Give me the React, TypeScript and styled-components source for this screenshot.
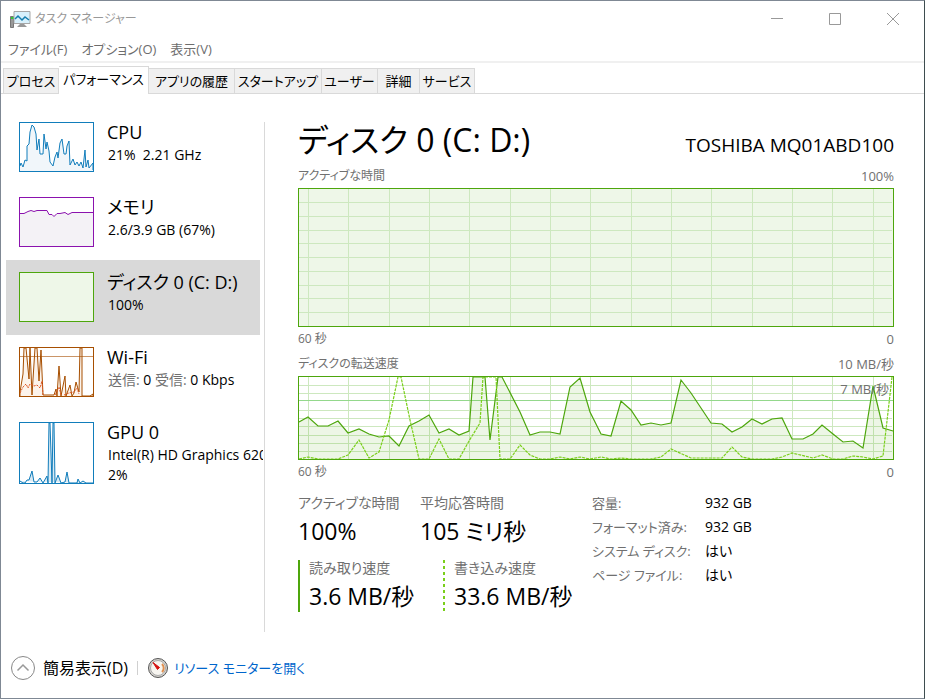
import React from "react";
import styled, { createGlobalStyle, css } from "styled-components";

const Global = createGlobalStyle`
  * { box-sizing: border-box; }
  html, body, #root { height: 100%; margin: 0; }
  body { background: #3e4d4f; }
  body, button {
    font-family: "Open Sans", "Noto Sans CJK JP", sans-serif;
    font-size: 14px;
    line-height: 20px;
    font-weight: 400;
    font-feature-settings: "palt";
    color: #000;
  }
  button { border: 0; padding: 0; background: none; text-align: left; }
  h1, h2, p, dl, dd, dt { margin: 0; font-weight: inherit; }
`;

const Window = styled.div`
  min-height: 100%;
  display: flex;
  flex-direction: column;
  background: #fff;
  border: 1px solid #7f8894;
  border-right-color: #3e4d4f;
`;

const TitleBar = styled.header`
  display: flex;
  align-items: center;
  height: 36px;
  padding: 0 2px 0 9px;
  color: #999;
`;
const AppTitle = styled.h1`
  flex: 1;
  margin-left: 4px;
  font-size: 12px;
`;
const Caption = styled.button`
  width: 58px;
  height: 36px;
  display: grid;
  place-items: center;
  color: #999;
`;

const MenuBar = styled.nav`
  display: flex;
  gap: 14px;
  height: 26px;
  padding-left: 7px;
  border-bottom: 2px solid #f0f0f0;
`;
const MenuItem = styled.button`
  font-size: 13px;
  color: #6d6d6d;
`;

const TabBar = styled.div`
  display: flex;
  align-items: flex-end;
  height: 31px;
  padding-left: 2px;
  border-bottom: 1px solid #d9d9d9;
`;
const Tab = styled.button<{ $active?: boolean; $width: number }>`
  width: ${(p) => p.$width}px;
  height: 25px;
  text-align: center;
  white-space: nowrap;
  font-size: 13px;
  background: #f0f0f0;
  border: 1px solid #d9d9d9;
  border-left-width: 0;
  border-bottom: 0;
  &:first-child { border-left-width: 1px; }
  ${(p) =>
    p.$active &&
    css`
      height: 28px;
      margin-bottom: -1px;
      padding-bottom: 3px;
      background: #fff;
    `}
`;

const Body = styled.main`
  flex: 1;
  display: flex;
  padding: 28px 30px 17px 5px;
`;
const Sidebar = styled.aside`
  width: 259px;
  flex: none;
  border-right: 1px solid #d9d9d9;
  display: flex;
  flex-direction: column;
  margin-right: 33px;
`;
const Resource = styled.button<{ $selected?: boolean; $first?: boolean }>`
  display: flex;
  align-items: flex-start;
  gap: 13px;
  min-height: ${(p) => (p.$first ? 63 : 75)}px;
  padding: ${(p) => (p.$first ? 0 : 12)}px 0 13px 13px;
  margin-right: ${(p) => (p.$selected ? 4 : 1)}px;
  background: ${(p) => (p.$selected ? "#d9d9d9" : "transparent")};
  overflow: hidden;
`;
const Thumb = styled.svg`
  flex: none;
  display: block;
`;
const ResourceText = styled.span`
  display: flex;
  flex-direction: column;
  white-space: nowrap;
  min-width: 0;
`;
const ResourceName = styled.span`
  font-size: 18px;
  line-height: 20px;
  margin-bottom: 3px;
`;
const ResourceValue = styled.span`
  line-height: 20px;
  margin-left: 1px;
`;
const Muted = styled.span`
  color: #707070;
`;

const Detail = styled.section`
  flex: 1;
  min-width: 0;
`;
const Heading = styled.div`
  display: flex;
  justify-content: space-between;
  align-items: baseline;
  height: 42px;
`;
const DiskName = styled.h2`
  font-size: 32px;
  line-height: 36px;
`;
const Model = styled.p`
  font-size: 19px;
`;
const ScaleRow = styled.div<{ $below?: boolean }>`
  display: flex;
  justify-content: space-between;
  height: ${(p) => (p.$below ? 25 : 24)}px;
  line-height: 24px;
  font-size: 13px;
  color: #707070;
`;
const ScaleName = styled.span`
  font-size: 12px;
`;
const ChartBox = styled.div`
  position: relative;
`;
const Chart = styled.svg`
  display: block;
  width: 100%;
`;
const Marker = styled.span`
  position: absolute;
  right: 5px;
  top: 3px;
  font-size: 13px;
  color: #707070;
`;

const Stats = styled.div`
  display: flex;
  margin-top: 10px;
`;
const Live = styled.dl`
  width: 294px;
`;
const LiveRow = styled.div<{ $cols: string }>`
  display: grid;
  grid-template-columns: ${(p) => p.$cols};
  & + & { margin-top: 13px; }
`;
const Metric = styled.div<{ $line?: "solid" | "dashed" }>`
  white-space: nowrap;
  height: 52px;
  ${(p) =>
    p.$line &&
    css`
      padding-left: 11px;
      background: ${p.$line === "solid"
        ? "linear-gradient(#4da60c, #4da60c)"
        : "repeating-linear-gradient(#7acf1a 0 3px, #fff 3px 6px)"}
        left / 2px 100% no-repeat;
    `}
`;
const MetricName = styled.dt`
  line-height: 16px;
  color: #707070;
`;
const MetricValue = styled.dd`
  font-size: 23px;
  line-height: 40px;
`;
const Facts = styled.dl`
  display: grid;
  grid-template-columns: 113px auto;
  grid-auto-rows: 24px;
  line-height: 16px;
  align-content: start;
  white-space: nowrap;
  dt { color: #707070; font-size: 13px; }
`;

const Footer = styled.footer`
  display: flex;
  align-items: center;
  height: 38px;
  margin-bottom: 11px;
  padding-left: 9px;
`;
const Fewer = styled.button`
  display: flex;
  align-items: center;
  gap: 7px;
  font-size: 16px;
`;
const Divider = styled.span`
  width: 1px;
  height: 14px;
  margin: 0 9px;
  background: #d0d0d0;
`;
const MonitorLink = styled.a`
  display: flex;
  align-items: center;
  gap: 5px;
  font-size: 13px;
  color: #0066cc;
  text-decoration: none;
`;

const verticals = [10, 50, 91, 131, 171, 212, 252, 292, 333, 373, 413, 454, 494, 534, 575];

function Grid({ height, rows }: { height: number; rows: number[] }) {
  return (
    <g stroke="#cde8bf" shapeRendering="crispEdges">
      {verticals.map((x) => (
        <line key={x} x1={x + 0.5} x2={x + 0.5} y1={1} y2={height - 1} />
      ))}
      {rows.map((y) => (
        <line key={y} x1={1} x2={594} y1={y + 0.5} y2={y + 0.5} />
      ))}
    </g>
  );
}

const readLine =
  "1,46 10,41 20,50 30,50 40,45 50,57 61,53 71,58 81,61 91,60 101,70 111,50 121,45 131,39 141,57 151,53 161,59 171,55 175,1 187,1 192,64 200,1 204,1 222,36 232,59 242,56 252,56 262,58 272,11 282,2 292,36 303,58 313,60 323,25 333,34 343,49 353,47 363,49 373,47 383,4 393,17 403,32 413,47 424,48 434,56 444,51 454,43 464,48 474,43 484,42 494,63 505,63 515,58 524,49 535,58 545,66 555,65 565,72 575,10 585,52 595,55";
const writeLine =
  "1,83 10,81 20,83 40,83 50,79 61,64 71,82 81,76 91,44 100,1 103,1 112,44 121,83 131,83 141,63 151,83 161,83 171,65 182,47 185,1 198,1 202,83 212,83 222,69 232,79 242,83 252,83 262,81 272,83 282,81 292,83 303,81 313,83 323,82 333,83 353,83 363,81 373,73 393,82 424,82 434,71 444,81 454,83 474,83 484,81 494,77 515,82 524,79 535,83 545,83 555,80 565,81 575,83 585,80 594,1";

const cpuLine =
  "1,44 2,41 4,45 6,38 8,39 8,24 10,22 11,10 13,3 15,5 17,12 18,28 20,17 21,32 24,32 25,12 27,27 28,20 30,29 31,40 34,44 36,35 38,30 39,36 41,21 43,17 45,32 47,32 48,24 50,19 51,43 54,37 56,43 58,40 60,44 62,40 64,46 66,28 67,45 69,38 70,46 74,41 74,48";

const tones: Record<string, string> = {
  cpu: "#117dbb", memory: "#8b12ae", disk: "#4da60c", wifi: "#a74f01", gpu: "#117dbb",
};

function Thumbnail({ kind }: { kind: string }) {
  const h = kind === "gpu" ? 62 : 50;
  return (
    <Thumb width="75" height={h} viewBox={`0 0 75 ${h}`} fill="none" stroke={tones[kind]}>
      {kind === "cpu" && (
        <>
          <polygon points={`1,49 ${cpuLine} 74,49`} fill="#f1f6fa" stroke="none" />
          <polyline points={cpuLine} />
        </>
      )}
      {kind === "memory" && (
        <path d="M0 16.5H5L9 14.500L12 13.500L15 14.500L18 13.500H28L30 17.500H33L35 19.500L38 16.500H41L46 15.500L49 17.500L53 15.500H75V50H0Z" fill="#f4f2f6" />
      )}
      {kind === "disk" && <rect width="75" height="50" fill="#eef7e8" stroke="none" />}
      {kind === "wifi" && (
        <>
          <path d="M1 45L4 27L5 1H7L10 32L11 1L13 48L16 1H18L20 34L22 3L24 48H35L37 42L38 49L40 19L42 49L46 29L47 49L51 38L53 49L55 46L57 35L60 45L61 1H63V49H71L74 47V50H1Z" fill="#fcf3eb" />
          <path d="M0 9.5H75" strokeOpacity=".6" />
          <path d="M1 46L4 40L7 37L9 41L11 37L15 39L18 38L21 41L23 34L24 48M36 48L40 40L42 48M45 48L50 46L55 45L58 41L60 47" stroke="#dd5726" strokeDasharray="2 1" />
        </>
      )}
      {kind === "gpu" && (
        <path d="M1 59L4 61H6L8 58H10L13 49L15 60H18L21 56L24 61L28 54L29 61L30 1H31L33 61L34 1H35L36 61L39 53L42 61L46 60L48 50L50 61H58L59 57L61 61L64 59L67 61H74" fill="#d9eaf4" />
      )}
      <rect x="0.5" y="0.5" width="74" height={h - 1} />
    </Thumb>
  );
}

const tabs: [string, number][] = [
  ["プロセス", 56], ["パフォーマンス", 90], ["アプリの履歴", 86], ["スタートアップ", 87],
  ["ユーザー", 56], ["詳細", 42], ["サービス", 55],
];

export default function App() {
  return (
    <Window>
      <Global />
      <TitleBar>
        <svg width="21" height="17" viewBox="0 0 21 17" aria-hidden="true">
          <path d="M.5 5.500h3v11h-3z" fill="#999" stroke="#777" />
          <path d="M1 6h3v2H1z" fill="#38c438" />
          <path d="M4 .5h16v12H4z" fill="#d8f1fc" stroke="#a7a7a7" />
          <path d="m5 8 3-3 4 4 3-3 4 3" stroke="#167eae" strokeWidth="1.500" fill="none" />
          <path d="M10 13h4l3 3H7z" fill="#999" />
        </svg>
        <AppTitle>タスク マネージャー</AppTitle>
        <Caption aria-label="最小化">
          <svg width="12" height="12"><path d="M0 5.5h12" stroke="currentColor" /></svg>
        </Caption>
        <Caption aria-label="最大化">
          <svg width="12" height="12"><path d="M.5.5h11v11H.5z" fill="none" stroke="currentColor" /></svg>
        </Caption>
        <Caption aria-label="閉じる">
          <svg width="12" height="12"><path d="m0 0 12 12M12 0 0 12" stroke="currentColor" /></svg>
        </Caption>
      </TitleBar>
      <MenuBar>
        <MenuItem>ファイル(F)</MenuItem>
        <MenuItem>オプション(O)</MenuItem>
        <MenuItem>表示(V)</MenuItem>
      </MenuBar>
      <TabBar role="tablist">
        {tabs.map(([label, width], i) => (
          <Tab key={label} role="tab" aria-selected={i === 1} $active={i === 1} $width={width}>{label}</Tab>
        ))}
      </TabBar>
      <Body>
        <Sidebar>
          <Resource $first>
            <Thumbnail kind="cpu" />
            <ResourceText><ResourceName>CPU</ResourceName><ResourceValue>21%&nbsp; 2.21 GHz</ResourceValue></ResourceText>
          </Resource>
          <Resource>
            <Thumbnail kind="memory" />
            <ResourceText><ResourceName>メモリ</ResourceName><ResourceValue>2.6/3.9 GB (67%)</ResourceValue></ResourceText>
          </Resource>
          <Resource $selected>
            <Thumbnail kind="disk" />
            <ResourceText><ResourceName>ディスク 0 (C: D:)</ResourceName><ResourceValue>100%</ResourceValue></ResourceText>
          </Resource>
          <Resource>
            <Thumbnail kind="wifi" />
            <ResourceText>
              <ResourceName>Wi-Fi</ResourceName>
              <ResourceValue><Muted>送信:</Muted> 0 <Muted>受信:</Muted> 0 Kbps</ResourceValue>
            </ResourceText>
          </Resource>
          <Resource>
            <Thumbnail kind="gpu" />
            <ResourceText>
              <ResourceName>GPU 0</ResourceName>
              <ResourceValue>Intel(R) HD Graphics 620</ResourceValue>
              <ResourceValue>2%</ResourceValue>
            </ResourceText>
          </Resource>
        </Sidebar>
        <Detail>
          <Heading>
            <DiskName>ディスク 0 (C: D:)</DiskName>
            <Model>TOSHIBA MQ01ABD100</Model>
          </Heading>
          <ScaleRow><ScaleName>アクティブな時間</ScaleName><span>100%</span></ScaleRow>
          <Chart viewBox="0 0 596 139" preserveAspectRatio="none" height="139">
            <rect width="596" height="139" fill="#eef7e8" />
            <Grid height={139} rows={[14, 28, 42, 55, 69, 83, 97, 110, 124]} />
            <rect x="0.5" y="0.5" width="595" height="138" fill="none" stroke="#4da60c" />
          </Chart>
          <ScaleRow $below><ScaleName>60 秒</ScaleName><span>0</span></ScaleRow>
          <ScaleRow><ScaleName>ディスクの転送速度</ScaleName><span>10 MB/秒</span></ScaleRow>
          <ChartBox>
            <Marker>7 MB/秒</Marker>
            <Chart viewBox="0 0 596 84" preserveAspectRatio="none" height="84">
              <Grid height={84} rows={[9, 17, 34, 42, 50, 59, 67, 75]} />
              <path d="M1 24.5H595" stroke="#94d88c" />
              <polygon points={`1,83 ${readLine} 595,83`} fill="#4da60c" fillOpacity=".1" />
              <polyline points={readLine} fill="none" stroke="#4da60c" strokeWidth="1.2" />
              <polyline points={writeLine} fill="none" stroke="#7acf1a" strokeWidth="1.2" strokeDasharray="3 1" />
              <rect x="0.5" y="0.5" width="595" height="83" fill="none" stroke="#4da60c" />
            </Chart>
          </ChartBox>
          <ScaleRow $below><ScaleName>60 秒</ScaleName><span>0</span></ScaleRow>
          <Stats>
            <Live>
              <LiveRow $cols="122px 1fr">
                <Metric><MetricName>アクティブな時間</MetricName><MetricValue>100%</MetricValue></Metric>
                <Metric><MetricName>平均応答時間</MetricName><MetricValue>105 ミリ秒</MetricValue></Metric>
              </LiveRow>
              <LiveRow $cols="145px 1fr">
                <Metric $line="solid"><MetricName>読み取り速度</MetricName><MetricValue>3.6 MB/秒</MetricValue></Metric>
                <Metric $line="dashed"><MetricName>書き込み速度</MetricName><MetricValue>33.6 MB/秒</MetricValue></Metric>
              </LiveRow>
            </Live>
            <Facts>
              <dt>容量:</dt><dd>932 GB</dd>
              <dt>フォーマット済み:</dt><dd>932 GB</dd>
              <dt>システム ディスク:</dt><dd>はい</dd>
              <dt>ページ ファイル:</dt><dd>はい</dd>
            </Facts>
          </Stats>
        </Detail>
      </Body>
      <Footer>
        <Fewer>
          <svg width="26" height="26" viewBox="0 0 26 26" fill="none" aria-hidden="true">
            <circle cx="13" cy="13" r="11.5" stroke="#888" />
            <path d="m7.500 15.500 5.500-5.500 5.500 5.500" stroke="#999" strokeWidth="1.500" />
          </svg>
          簡易表示(D)
        </Fewer>
        <Divider />
        <MonitorLink href="#resource-monitor">
          <svg width="22" height="22" viewBox="0 0 22 22" fill="none" aria-hidden="true">
            <circle cx="11" cy="11" r="9.500" fill="#d4d2cd" stroke="#555" />
            <circle cx="11" cy="11" r="7.500" fill="#f7f5f0" stroke="#aaa" />
            <path d="M15 7a5.500 5.500 0 0 1 0 8" stroke="#e09050" strokeWidth="2" />
            <path d="m6 5.500 6.500 5-2 2z" fill="#d51010" stroke="#d51010" />
          </svg>
          リソース モニターを開く
        </MonitorLink>
      </Footer>
    </Window>
  );
}
